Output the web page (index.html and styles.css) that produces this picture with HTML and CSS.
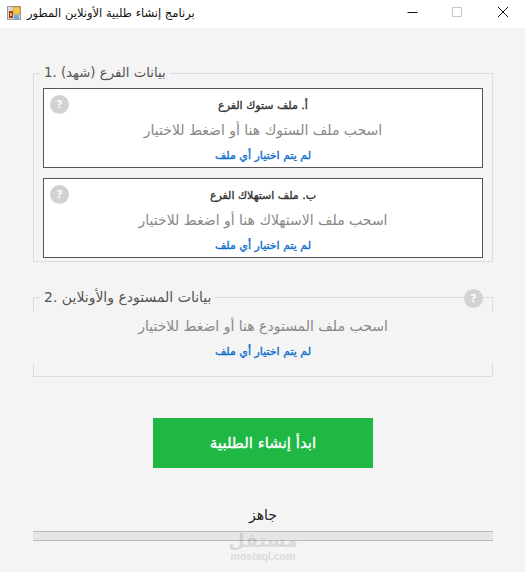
FILE: index.html
```html
<!DOCTYPE html>
<html lang="ar">
<head>
    <meta charset="UTF-8">
    <title>برنامج إنشاء طلبية الأونلاين المطور</title>
    <link rel="stylesheet" href="styles.css">
</head>
<body>

<!-- Title Bar -->
<div class="titlebar">
    <svg class="app-icon" width="14" height="14" viewBox="0 0 14 14">
        <rect x="0.5" y="0.5" width="13" height="13" fill="#d8d8d8" stroke="#9a9a9a"/>
        <rect x="2" y="5" width="4" height="7" fill="#a8321c"/>
        <rect x="3" y="7" width="2" height="3" fill="#e8b878"/>
        <rect x="6" y="1" width="7" height="7" fill="#f2c84c" stroke="#c08a20" stroke-width="0.6"/>
        <rect x="7" y="9" width="5" height="4" fill="#6aa8e0"/>
    </svg>
    <span class="app-title" dir="rtl">برنامج إنشاء طلبية الأونلاين المطور</span>
    <div class="window-buttons">
        <svg width="46" height="28" viewBox="0 0 46 28"><path d="M20.5 12.5H30.5" stroke="#111" fill="none"/></svg>
        <svg width="46" height="28" viewBox="0 0 46 28"><rect x="19.5" y="7.5" width="9" height="9" stroke="#c8c8c8" fill="none"/></svg>
        <svg width="46" height="28" viewBox="0 0 46 28"><path d="M19 7L29 17M29 7L19 17" stroke="#111" fill="none"/></svg>
    </div>
</div>

<!-- Content -->
<div class="content">

    <fieldset class="group group-branch">
        <legend><span dir="rtl">بيانات الفرع (شهد) .1</span></legend>

        <div class="drop-card">
            <span class="help">?</span>
            <div class="card-title" dir="rtl">أ. ملف ستوك الفرع</div>
            <div class="hint" dir="rtl">اسحب ملف الستوك هنا أو اضغط للاختيار</div>
            <div class="file-state" dir="rtl">لم يتم اختيار أي ملف</div>
        </div>

        <div class="drop-card">
            <span class="help">?</span>
            <div class="card-title" dir="rtl">ب. ملف استهلاك الفرع</div>
            <div class="hint" dir="rtl">اسحب ملف الاستهلاك هنا أو اضغط للاختيار</div>
            <div class="file-state" dir="rtl">لم يتم اختيار أي ملف</div>
        </div>
    </fieldset>

    <fieldset class="group group-store">
        <legend><span dir="rtl">بيانات المستودع والأونلاين .2</span></legend>

        <div class="store-panel">
            <span class="help help-store">?</span>
            <div class="hint" dir="rtl">اسحب ملف المستودع هنا أو اضغط للاختيار</div>
            <div class="file-state" dir="rtl">لم يتم اختيار أي ملف</div>
        </div>
    </fieldset>

    <div class="start-button" dir="rtl">ابدأ إنشاء الطلبية</div>

    <div class="status" dir="rtl">جاهز</div>
    <div class="progress"></div>
</div>

<!-- Watermark -->
<div class="watermark">
    <div class="mark-ar" dir="rtl">مستقل</div>
    <div class="mark-en">mostaql.com</div>
</div>

</body>
</html>
```

FILE: styles.css
```css
html, body {
    margin: 0;
    height: 572px;
    overflow: hidden;
}

body {
    position: relative;
    background: #f4f4f4;
    font-family: 'DejaVu Sans', sans-serif;
    color: #333;
}

/* Title Bar */
.titlebar {
    display: flex;
    align-items: center;
    height: 28px;
    background: #fff;
    padding-left: 7px;
}

.app-icon {
    margin-right: 6px;
    margin-top: -3px;
}

.app-title {
    font-size: 11.5px;
    color: #111;
    margin-top: -3px;
}

.window-buttons {
    display: flex;
    margin-left: auto;
}

.window-buttons svg {
    display: block;
}

/* Content */
.content {
    padding: 37px 32px 0 33px;
}

.group {
    margin: 0;
    padding: 7px 9px 3px 9px;
    border: 1px solid #dcdcdc;
    min-width: 0;
}

.group legend {
    margin-left: 6px;
    padding: 0 4px;
    font-size: 13.3px;
    line-height: 16px;
    color: #555;
}

.group-branch legend {
    margin-left: -3px;
}

.group-store {
    margin-top: 27px;
    height: 88px;
    box-sizing: border-box;
    padding: 0;
}

.group-store legend {
    font-size: 14px;
}

/* Drop Cards */
.drop-card {
    position: relative;
    box-sizing: border-box;
    height: 80px;
    margin-bottom: 10px;
    border: 1px solid #555;
    background: #fff;
    text-align: center;
}

.drop-card:last-child {
    margin-bottom: 0;
}

/* regular face with a thin stroke, the bold face is too wide at this height */
.card-title {
    margin-top: 9px;
    font-size: 11px;
    line-height: 16px;
    color: #333;
    -webkit-text-stroke: 0.35px #333;
}

.hint {
    margin-top: 7px;
    font-size: 14px;
    line-height: 18px;
    color: #888;
}

.file-state {
    margin-top: 9px;
    font-size: 11px;
    line-height: 16px;
    color: #0a6ecc;
    -webkit-text-stroke: 0.35px #0a6ecc;
}

.help {
    position: absolute;
    top: 6px;
    left: 6px;
    width: 19px;
    height: 19px;
    border-radius: 50%;
    background: #d2d2d2;
    color: #fafafa;
    font-size: 11px;
    font-weight: bold;
    line-height: 19px;
    text-align: center;
}

/* Second group */
.store-panel {
    position: relative;
    margin: 7px -1px 0;
    height: 51px;
    background: #f4f4f4;
    text-align: center;
}

.store-panel .hint {
    margin-top: 0;
    padding-top: 5px;
}

.store-panel .file-state {
    margin-top: 9px;
}

.help-store {
    top: -23px;
    left: auto;
    right: 10px;
}

/* Start Button */
.start-button {
    width: 220px;
    height: 50px;
    margin: 41px auto 0;
    background: #1fb845;
    color: #fff;
    font-size: 15px;
    line-height: 50px;
    text-align: center;
    -webkit-text-stroke: 0.3px #fff;
}

/* Status */
.status {
    margin-top: 37px;
    font-size: 14px;
    line-height: 20px;
    color: #222;
    text-align: center;
}

.progress {
    height: 8px;
    margin-top: 6px;
    border-top: 1px solid #bcbcbc;
    border-bottom: 1px solid #bcbcbc;
    background: #e6e6e6;
}

/* Watermark */
.watermark {
    position: absolute;
    left: 213px;
    top: 528px;
    width: 100px;
    text-align: center;
    color: #000;
    opacity: 0.1;
    pointer-events: none;
}

.mark-ar {
    font-size: 19px;
    font-weight: bold;
    line-height: 24px;
}

.mark-en {
    font-family: 'Liberation Sans', sans-serif;
    font-size: 10.5px;
    font-weight: bold;
    line-height: 9px;
}
```
